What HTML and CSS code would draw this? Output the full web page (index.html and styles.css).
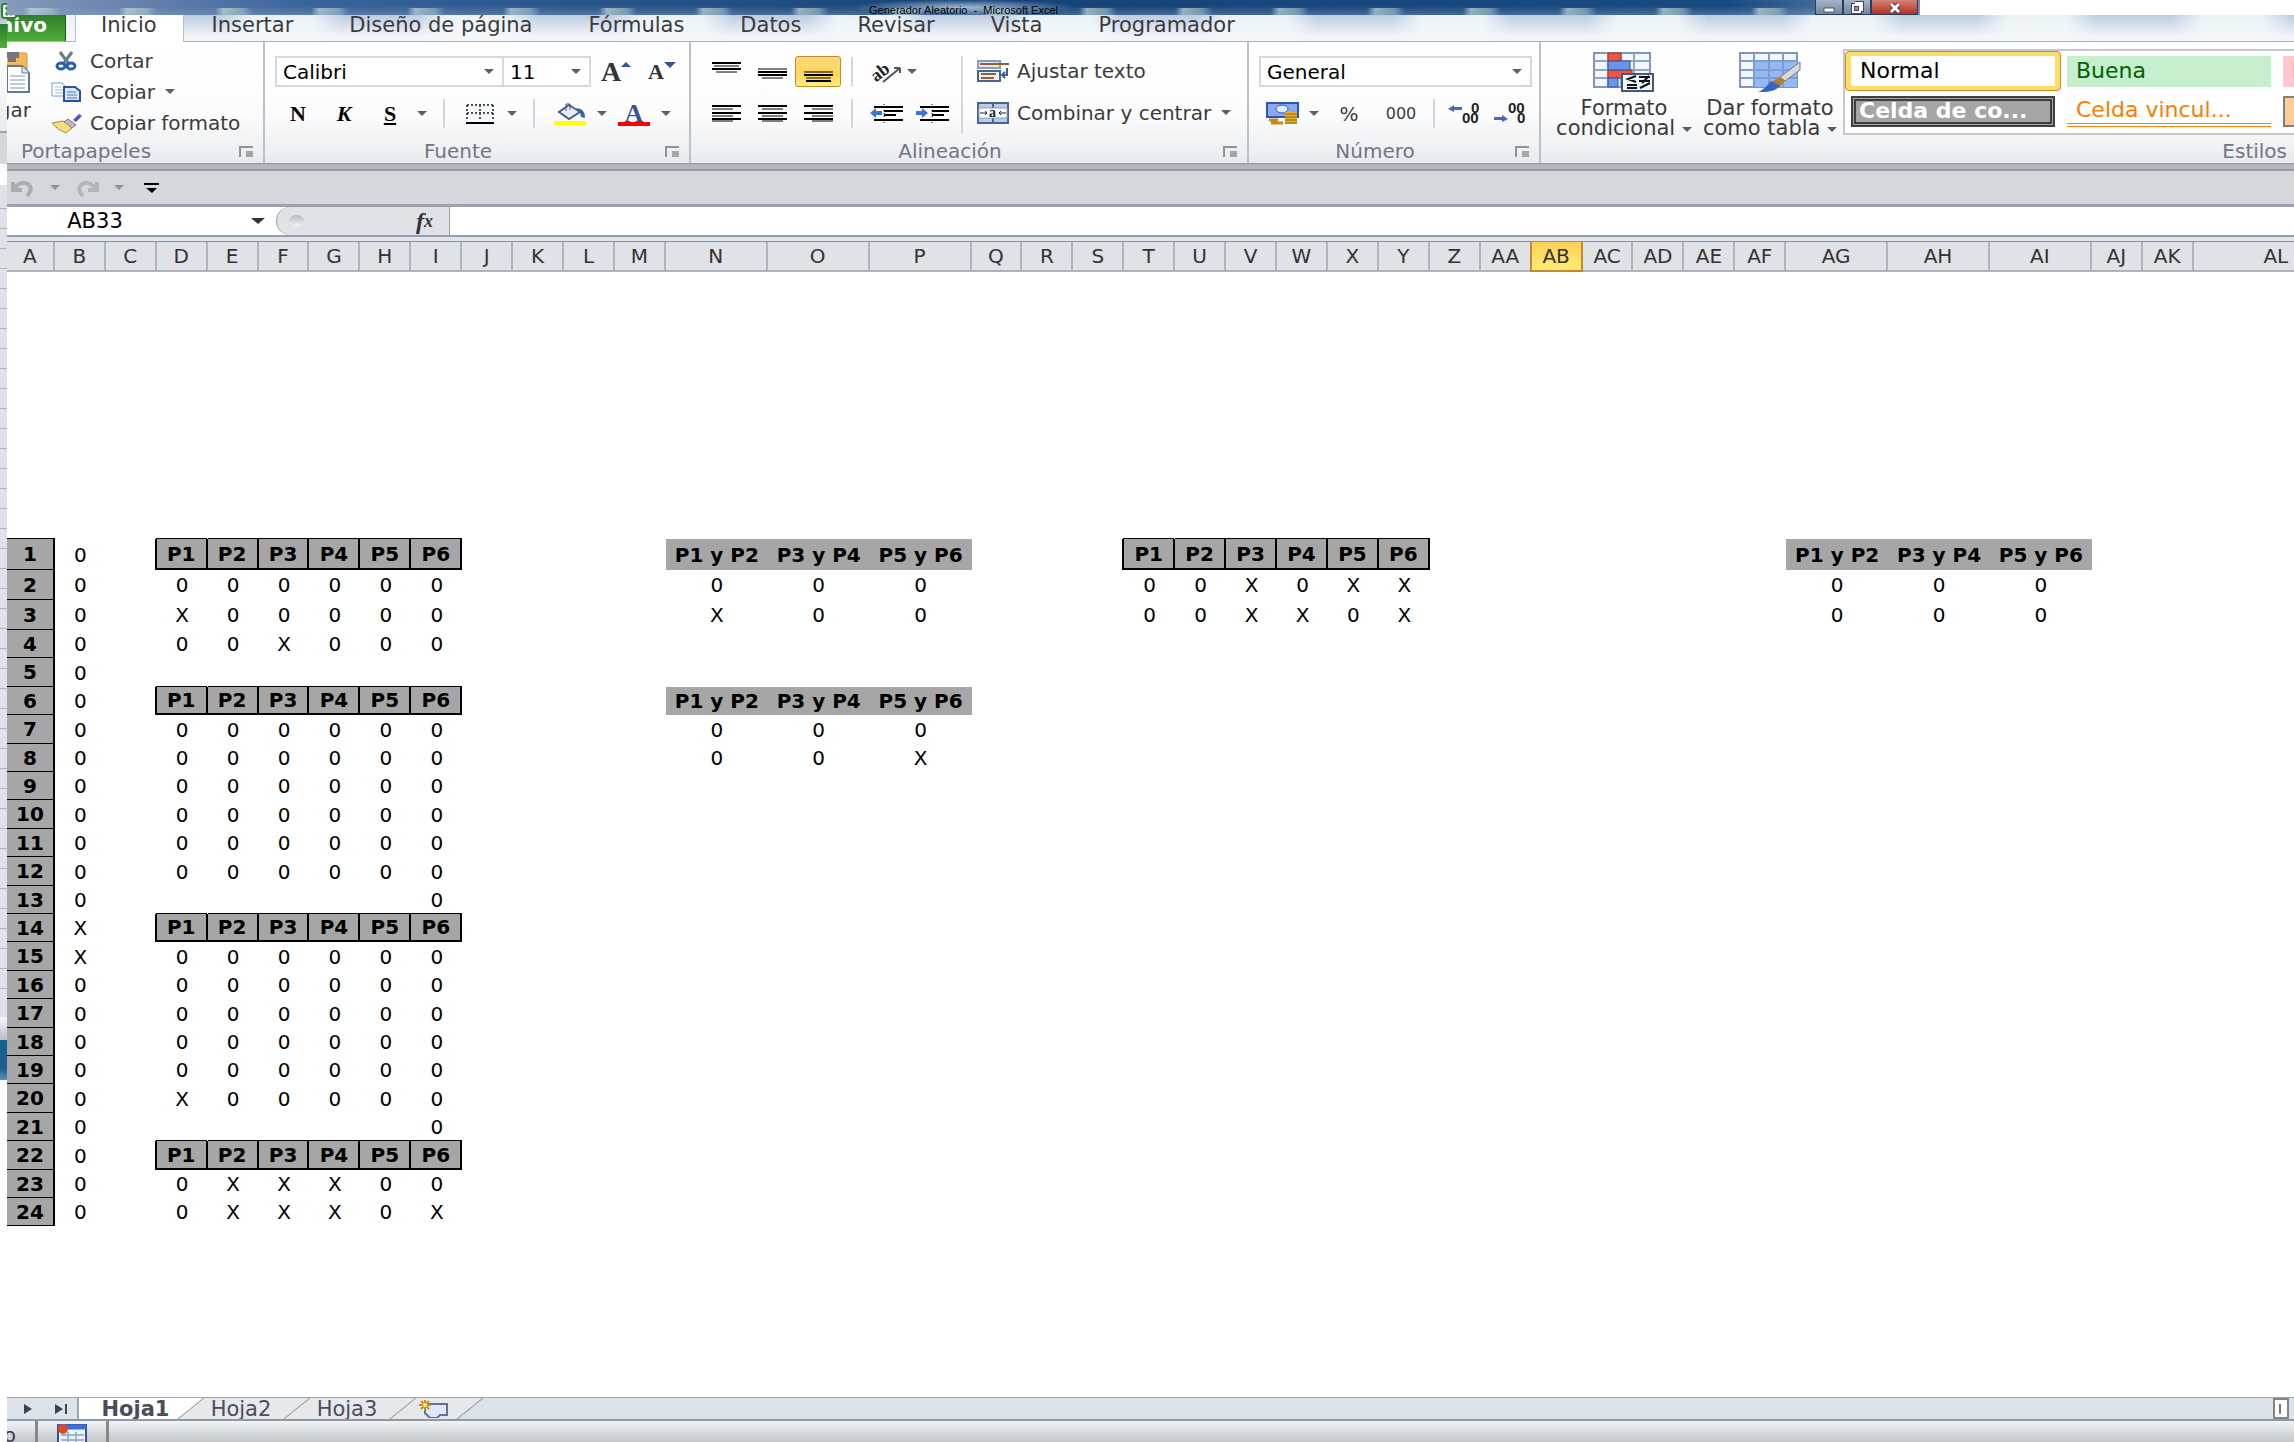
FILE: index.html
```html
<!DOCTYPE html>
<html lang="es">
<head>
    <meta charset="UTF-8">
    <meta name="viewport" content="width=device-width, initial-scale=1.0">
    <title>Generador Aleatorio - Microsoft Excel</title>
    <link rel="stylesheet" href="styles.css">
</head>
<body>

    <!-- Edge of the window behind -->
    <div class="behind">
        <div class="behind-top"></div>
        <div class="behind-file"></div>
        <div class="behind-ribbon"></div>
        <div class="behind-bar"></div>
        <div class="behind-rows"></div>
        <div class="behind-status"></div>
        <div class="behind-desktop"></div>
        <svg class="app-icon" width="16" height="16" viewBox="0 0 16 16"><rect x="1" y="1" width="14" height="14" rx="2" fill="#f4f8f2" stroke="#2f7f2c" stroke-width="2"/><path d="M5 4l6 8M11 4l-6 8" stroke="#2f8f2c" stroke-width="3"/></svg>
    </div>

    <div class="window">
        <header class="titlebar">
            <div class="title">
                <span>Generador Aleatorio&nbsp; -&nbsp; Microsoft Excel</span>
                <div class="window-buttons">
                    <button aria-label="Minimizar"><svg width="12" height="15"><rect x="1" y="8" width="10" height="4" fill="#fff" stroke="#556"/></svg></button>
                    <button aria-label="Restaurar"><svg width="14" height="15"><path d="M5 3h7v7h-2M3 5h7v7H3z" fill="none" stroke="#445" stroke-width="4"/><path d="M5 3h7v7h-2M3 5h7v7H3z" fill="none" stroke="#fff" stroke-width="2"/></svg></button>
                    <button class="close" aria-label="Cerrar"><svg width="14" height="15"><path d="M3 4l8 8M11 4l-8 8" stroke="#534" stroke-width="5"/><path d="M3 4l8 8M11 4l-8 8" stroke="#fff" stroke-width="3"/></svg></button>
                </div>
            </div>
        </header>

        <nav class="tabs">
            <button class="file">Archivo</button>
            <button class="active">Inicio</button>
            <button>Insertar</button>
            <button>Diseño de página</button>
            <button>Fórmulas</button>
            <button>Datos</button>
            <button>Revisar</button>
            <button>Vista</button>
            <button>Programador</button>
        </nav>

        <div class="ribbon">
            <section class="group clipboard">
                <div class="group-body">
                    <button class="paste">
                        <svg width="36" height="42" viewBox="0 0 36 42">
                            <rect x="2" y="1" width="30" height="34" rx="2" fill="#f0b95a" stroke="#c98d35"/>
                            <path d="M10 0h14v6h-3v4h-8V6h-3z" fill="#777"/>
                            <path d="M12 14h15l7 7v19H12z" fill="#fff" stroke="#66788f" stroke-width="2"/>
                            <path d="M27 14v7h7" fill="#dde8f5" stroke="#66788f"/>
                            <path d="M15 24h15M15 28h15M15 32h15M15 36h15" stroke="#bccbdc" stroke-width="2"/>
                        </svg>
                        <span>Pegar</span>
                    </button>
                    <div class="clip-list">
                        <button class="item">
                            <svg width="32" height="20" viewBox="0 0 32 20">
                                <path d="M10 1l8 11M22 1l-8 11" stroke="#6d7a8c" stroke-width="3"/>
                                <ellipse cx="11" cy="15" rx="4" ry="3" fill="none" stroke="#2b5db0" stroke-width="3"/>
                                <ellipse cx="21" cy="15" rx="4" ry="3" fill="none" stroke="#2b5db0" stroke-width="3"/>
                            </svg>Cortar</button>
                        <button class="item">
                            <svg width="32" height="20" viewBox="0 0 32 20">
                                <path d="M2 1h10l4 4v9H2z" fill="#fff" stroke="#7d9bc8"/>
                                <path d="M5 5h6M5 8h8M5 11h8" stroke="#9db4d8"/>
                                <path d="M14 5h11l5 4v10H14z" fill="#dbe8fb" stroke="#2c4fa0" stroke-width="2"/>
                                <path d="M17 10h9M17 13h10M17 16h10" stroke="#4d74bd"/>
                            </svg>Copiar <i class="caret"></i></button>
                        <button class="item">
                            <svg width="32" height="20" viewBox="0 0 32 20">
                                <path d="M23 7l6-6 3 2-6 6z" fill="#5a50b8"/>
                                <path d="M18 6l8 6-4 3-8-6z" fill="#b9bcc4" stroke="#777"/>
                                <path d="M13 8l9 7-6 5C11 18 6 15 2 10z" fill="#f3df7e" stroke="#a08a4a"/>
                            </svg>Copiar formato</button>
                    </div>
                </div>
                <footer>Portapapeles<button class="launcher" aria-label="Más opciones"></button></footer>
            </section>

            <section class="group font">
                <div class="group-body">
                    <div class="row">
                        <label class="combo name"><select aria-label="Fuente"><option>Calibri</option></select><i class="caret"></i></label>
                        <label class="combo size"><select aria-label="Tamaño"><option>11</option></select><i class="caret"></i></label>
                        <button class="tool serif big">A<svg width="10" height="6"><path d="M5 0l5 5H0z" fill="#35549c"/></svg></button>
                        <button class="tool serif small">A<svg width="12" height="6"><path d="M0 0h12L6 6z" fill="#35549c"/></svg></button>
                    </div>
                    <div class="row">
                        <button class="tool serif"><b>N</b></button>
                        <button class="tool serif"><b><em>K</em></b></button>
                        <button class="tool serif"><b><u>S</u></b></button>
                        <button class="drop" aria-label="Subrayado"><i class="caret"></i></button>
                        <span class="sep"></span>
                        <button class="tool" aria-label="Bordes"><svg width="28" height="20"><path d="M1 1h26M1 9h26M1 1v16M14 1v16M27 1v16" stroke="#456" stroke-width="2" stroke-dasharray="2 2"/><path d="M0 19h28" stroke="#000" stroke-width="2"/></svg></button>
                        <button class="drop" aria-label="Más bordes"><i class="caret"></i></button>
                        <span class="sep"></span>
                        <button class="tool" aria-label="Color de relleno"><svg width="32" height="22"><path d="M15 2l11 7-11 7L5 9z" fill="#e8eef7" stroke="#4a5f86" stroke-width="2"/><path d="M12 8V1h4v6" fill="none" stroke="#4a5f86"/><path d="M22 5q9 0 9 10l-4-1-1-5z" fill="#2f63b8"/><rect y="18" width="32" height="4" fill="#ff0"/></svg></button>
                        <button class="drop" aria-label="Más colores de relleno"><i class="caret"></i></button>
                        <button class="tool font-color">A</button>
                        <button class="drop" aria-label="Más colores de fuente"><i class="caret"></i></button>
                    </div>
                </div>
                <footer>Fuente<button class="launcher" aria-label="Más opciones"></button></footer>
            </section>

            <section class="group align">
                <div class="group-body columns">
                    <div class="stack">
                        <div class="row">
                            <button class="tool" aria-label="Alinear arriba"><svg width="29" height="20"><path d="M0 1h29M0 7h29" stroke="#000" stroke-width="2"/><path d="M2 4h25M4 10h21" stroke="#000"/></svg></button>
                            <button class="tool" aria-label="Alinear al medio"><svg width="29" height="20"><path d="M0 10h29M0 13h29" stroke="#000" stroke-width="2"/><path d="M0 7h29M4 16h21" stroke="#000"/></svg></button>
                            <button class="tool on" aria-label="Alinear abajo"><svg width="29" height="20"><path d="M0 13h29M2 19h25" stroke="#000" stroke-width="2"/><path d="M0 10h29M2 16h25" stroke="#000"/></svg></button>
                            <span class="sep"></span>
                            <button class="tool" aria-label="Orientación"><svg width="32" height="22"><text x="1" y="17" transform="rotate(-38 10 12)" class="ab large-ab">ab</text><path d="M13 21L30 7M30 7h-6M30 7v5" fill="none" stroke="#555" stroke-width="2"/></svg></button>
                            <button class="drop near" aria-label="Más orientaciones"><i class="caret"></i></button>
                        </div>
                        <div class="row">
                            <button class="tool" aria-label="Izquierda"><svg width="29" height="17"><path d="M0 1h29M0 8h29M0 14h29" stroke="#000" stroke-width="2"/><path d="M0 4h21M0 11h21M0 16h21" stroke="#000"/></svg></button>
                            <button class="tool" aria-label="Centrar"><svg width="29" height="17"><path d="M0 1h29M0 8h29M0 14h29" stroke="#000" stroke-width="2"/><path d="M4 4h21M4 11h21M4 16h21" stroke="#000"/></svg></button>
                            <button class="tool" aria-label="Derecha"><svg width="29" height="17"><path d="M0 1h29M0 8h29M0 14h29" stroke="#000" stroke-width="2"/><path d="M8 4h21M8 11h21M8 16h21" stroke="#000"/></svg></button>
                            <span class="sep"></span>
                            <button class="tool" aria-label="Disminuir sangría"><svg width="33" height="20"><path d="M4 3h29M14 7h19M14 11h12M4 16h29" stroke="#000" stroke-width="2"/><path d="M14 0v20" stroke="#000" stroke-dasharray="1 2"/><path d="M0 9l6-5v3h6v4H6v3z" fill="#3c74d0"/></svg></button>
                            <button class="tool" aria-label="Aumentar sangría"><svg width="33" height="20"><path d="M4 3h29M16 7h17M16 11h12M4 16h29" stroke="#000" stroke-width="2"/><path d="M16 0v20" stroke="#000" stroke-dasharray="1 2"/><path d="M12 9L6 4v3H0v4h6v3z" fill="#3c74d0"/></svg></button>
                        </div>
                    </div>
                    <span class="sep tall"></span>
                    <div class="stack">
                        <button class="item">
                            <svg width="32" height="22" viewBox="0 0 32 22">
                                <rect x="1" y="1" width="22" height="7" fill="#dfe9f7" stroke="#8a9cb8" stroke-width="2"/>
                                <path d="M3 4h29" stroke="#93602f" stroke-width="2"/>
                                <rect x="1" y="11" width="22" height="10" fill="#eaf1fb" stroke="#4a648f" stroke-width="2"/>
                                <path d="M4 14h15M4 18h13" stroke="#93602f" stroke-width="2"/>
                                <path d="M30 8v7h-4M28 12l-3 3 3 3" fill="none" stroke="#3e5f9d" stroke-width="2"/>
                            </svg>Ajustar texto</button>
                        <button class="item">
                            <svg width="32" height="22" viewBox="0 0 32 22">
                                <rect x="1" y="1" width="30" height="20" fill="#b9cbe6" stroke="#4a648f" stroke-width="2"/>
                                <path d="M16 1v20" stroke="#4a648f" stroke-width="2"/>
                                <rect x="2" y="6" width="28" height="10" fill="#fff" stroke="#8ca3c6"/>
                                <path d="M3 11h7M22 11h7M8 9l2 2-2 2M24 9l-2 2 2 2" fill="none" stroke="#222"/>
                                <text x="12" y="15" class="ab">a</text>
                            </svg>Combinar y centrar <i class="caret"></i></button>
                    </div>
                </div>
                <footer>Alineación<button class="launcher" aria-label="Más opciones"></button></footer>
            </section>

            <section class="group number">
                <div class="group-body">
                    <div class="row">
                        <label class="combo format"><select aria-label="Formato de número"><option>General</option></select><i class="caret"></i></label>
                    </div>
                    <div class="row">
                        <button class="tool" aria-label="Formato de contabilidad"><svg width="33" height="23"><rect x="1" y="1" width="31" height="14" fill="#88a9ea" stroke="#2f56b4" stroke-width="2"/><ellipse cx="16" cy="7" rx="6" ry="4" fill="#dfe9fc" stroke="#2f56b4"/><path d="M19 10h12v12H19z" fill="#e8b02c"/><path d="M19 12h12M19 15h12M19 18h12M19 21h12" stroke="#8c6410"/><path d="M3 18h9M5 21h12" stroke="#c48b1b" stroke-width="3"/></svg></button>
                        <button class="drop" aria-label="Más formatos"><i class="caret"></i></button>
                        <button class="tool wide">%</button>
                        <button class="tool wide zeros">000</button>
                        <span class="sep"></span>
                        <button class="tool" aria-label="Aumentar decimales"><svg width="33" height="22"><path d="M0 6l6-4v2h8v3H6v2z" fill="#3f6cc8"/><text x="23" y="10" class="dec">0</text><text x="14" y="20" class="dec">00</text></svg></button>
                        <button class="tool" aria-label="Disminuir decimales"><svg width="33" height="22"><path d="M14 16l-6-4v2H0v3h8v2z" fill="#3f6cc8"/><text x="14" y="10" class="dec">00</text><text x="23" y="20" class="dec">0</text></svg></button>
                    </div>
                </div>
                <footer>Número<button class="launcher" aria-label="Más opciones"></button></footer>
            </section>

            <section class="group styles">
                <div class="group-body columns">
                    <button class="large">
                        <svg width="62" height="40" viewBox="0 0 62 40">
                            <rect x="1" y="1" width="56" height="34" fill="#f4f8fe" stroke="#7f95bd" stroke-width="2"/>
                            <path d="M1 9h56M1 18h56M1 26h56M15 1v34M28 1v34M41 1v34" stroke="#8ea5cc" stroke-width="2"/>
                            <path d="M15 1h13v8H15zM15 18h24v8H15z" fill="#f0553f" stroke="#b52a17"/>
                            <path d="M15 9h22v9H15zM15 26h10v9H15z" fill="#6695ec" stroke="#2c50a5"/>
                            <rect x="29" y="22" width="31" height="17" fill="#eef5fd" stroke="#41597a" stroke-width="2"/>
                            <path d="M43 24l-8 3 8 3M34 33h10M34 36h10M46 25h11M46 29h11M56 24l-7 7M47 36l10-5" fill="none" stroke="#111" stroke-width="2"/>
                        </svg>
                        <span>Formato<br>condicional <i class="caret"></i></span>
                    </button>
                    <button class="large">
                        <svg width="62" height="40" viewBox="0 0 62 40">
                            <rect x="1" y="1" width="57" height="34" fill="#f4f8fe" stroke="#7f95bd" stroke-width="2"/>
                            <rect x="15" y="9" width="43" height="26" fill="#93b8f5"/>
                            <path d="M1 9h57M1 18h57M1 26h57M15 1v34M30 1v34M44 1v34" stroke="#7f9ccf" stroke-width="2"/>
                            <path d="M61 10v8L46 29l-5-4z" fill="#d8d8d8" stroke="#777"/>
                            <path d="M41 25l5 4-6 6-8-5z" fill="#b07d32"/>
                            <path d="M32 29l9 5q-6 7-22 6 6-2 13-11z" fill="#3266c2"/>
                        </svg>
                        <span>Dar formato<br>como tabla <i class="caret"></i></span>
                    </button>
                    <div class="gallery">
                        <button class="selected"><span>Normal</span></button>
                        <button><span class="good">Buena</span></button>
                        <button><span class="bad">Incorrecto</span></button>
                        <button><span class="check">Celda de co...</span></button>
                        <button><span class="linked">Celda vincul...</span></button>
                        <button><span class="input">Entrada</span></button>
                    </div>
                </div>
                <footer>Estilos</footer>
            </section>
        </div>

        <div class="quick">
            <button class="tool" aria-label="Deshacer"><svg width="26" height="18"><path d="M3 3v8h9M4 10q7-9 14-5 6 5-1 12" fill="none" stroke="#a9acb1" stroke-width="4"/></svg></button>
            <button class="drop faded" aria-label="Lista deshacer"><i class="caret"></i></button>
            <button class="tool" aria-label="Rehacer"><svg width="26" height="18"><path d="M23 3v8h-9M22 10q-7-9-14-5-6 5 1 12" fill="none" stroke="#b3b6ba" stroke-width="4"/></svg></button>
            <button class="drop faded" aria-label="Lista rehacer"><i class="caret"></i></button>
            <button class="tool" aria-label="Personalizar"><svg width="15" height="10"><path d="M0 1h15" stroke="#000" stroke-width="2"/><path d="M2 5h11L8 10z"/></svg></button>
        </div>

        <div class="formula-bar">
            <input class="name-box" aria-label="Cuadro de nombres" value="AB33">
            <button class="name-drop" aria-label="Nombres"><i class="caret"></i></button>
            <div class="fx"><span class="knob"></span><button>f<small>x</small></button></div>
            <input class="formula" aria-label="Barra de fórmulas">
        </div>

        <main class="sheet">
            <table>
                <colgroup>
                    <col class="first"><col span="12"><col span="3" class="wide"><col span="16"><col span="3" class="wide"><col span="2"><col class="last">
                </colgroup>
                <thead>
                    <tr>
                        <th>A</th><th>B</th><th>C</th><th>D</th><th>E</th><th>F</th><th>G</th><th>H</th><th>I</th><th>J</th><th>K</th><th>L</th><th>M</th>
                        <th>N</th><th>O</th><th>P</th>
                        <th>Q</th><th>R</th><th>S</th><th>T</th><th>U</th><th>V</th><th>W</th><th>X</th><th>Y</th><th>Z</th>
                        <th>AA</th><th class="current">AB</th><th>AC</th><th>AD</th><th>AE</th><th>AF</th>
                        <th>AG</th><th>AH</th><th>AI</th><th>AJ</th><th>AK</th><th>AL</th>
                    </tr>
                </thead>
                <tbody class="blank"><tr><td colspan="38"></td></tr></tbody>
                <tbody class="data">
                    <tr><th>1</th><td>0</td><td></td><th>P1</th><th>P2</th><th>P3</th><th>P4</th><th>P5</th><th>P6</th><td colspan="4"></td><th class="pair">P1 y P2</th><th class="pair">P3 y P4</th><th class="pair">P5 y P6</th><td colspan="3"></td><th>P1</th><th>P2</th><th>P3</th><th>P4</th><th>P5</th><th>P6</th><td colspan="7"></td><th class="pair">P1 y P2</th><th class="pair">P3 y P4</th><th class="pair">P5 y P6</th></tr>
                    <tr><th>2</th><td>0</td><td></td><td>0</td><td>0</td><td>0</td><td>0</td><td>0</td><td>0</td><td colspan="4"></td><td>0</td><td>0</td><td>0</td><td colspan="3"></td><td>0</td><td>0</td><td>X</td><td>0</td><td>X</td><td>X</td><td colspan="7"></td><td>0</td><td>0</td><td>0</td></tr>
                    <tr><th>3</th><td>0</td><td></td><td>X</td><td>0</td><td>0</td><td>0</td><td>0</td><td>0</td><td colspan="4"></td><td>X</td><td>0</td><td>0</td><td colspan="3"></td><td>0</td><td>0</td><td>X</td><td>X</td><td>0</td><td>X</td><td colspan="7"></td><td>0</td><td>0</td><td>0</td></tr>
                    <tr><th>4</th><td>0</td><td></td><td>0</td><td>0</td><td>X</td><td>0</td><td>0</td><td>0</td></tr>
                    <tr><th>5</th><td>0</td></tr>
                    <tr><th>6</th><td>0</td><td></td><th>P1</th><th>P2</th><th>P3</th><th>P4</th><th>P5</th><th>P6</th><td colspan="4"></td><th class="pair">P1 y P2</th><th class="pair">P3 y P4</th><th class="pair">P5 y P6</th></tr>
                    <tr><th>7</th><td>0</td><td></td><td>0</td><td>0</td><td>0</td><td>0</td><td>0</td><td>0</td><td colspan="4"></td><td>0</td><td>0</td><td>0</td></tr>
                    <tr><th>8</th><td>0</td><td></td><td>0</td><td>0</td><td>0</td><td>0</td><td>0</td><td>0</td><td colspan="4"></td><td>0</td><td>0</td><td>X</td></tr>
                    <tr><th>9</th><td>0</td><td></td><td>0</td><td>0</td><td>0</td><td>0</td><td>0</td><td>0</td></tr>
                    <tr><th>10</th><td>0</td><td></td><td>0</td><td>0</td><td>0</td><td>0</td><td>0</td><td>0</td></tr>
                    <tr><th>11</th><td>0</td><td></td><td>0</td><td>0</td><td>0</td><td>0</td><td>0</td><td>0</td></tr>
                    <tr><th>12</th><td>0</td><td></td><td>0</td><td>0</td><td>0</td><td>0</td><td>0</td><td>0</td></tr>
                    <tr><th>13</th><td>0</td><td colspan="6"></td><td>0</td></tr>
                    <tr><th>14</th><td>X</td><td></td><th>P1</th><th>P2</th><th>P3</th><th>P4</th><th>P5</th><th>P6</th></tr>
                    <tr><th>15</th><td>X</td><td></td><td>0</td><td>0</td><td>0</td><td>0</td><td>0</td><td>0</td></tr>
                    <tr><th>16</th><td>0</td><td></td><td>0</td><td>0</td><td>0</td><td>0</td><td>0</td><td>0</td></tr>
                    <tr><th>17</th><td>0</td><td></td><td>0</td><td>0</td><td>0</td><td>0</td><td>0</td><td>0</td></tr>
                    <tr><th>18</th><td>0</td><td></td><td>0</td><td>0</td><td>0</td><td>0</td><td>0</td><td>0</td></tr>
                    <tr><th>19</th><td>0</td><td></td><td>0</td><td>0</td><td>0</td><td>0</td><td>0</td><td>0</td></tr>
                    <tr><th>20</th><td>0</td><td></td><td>X</td><td>0</td><td>0</td><td>0</td><td>0</td><td>0</td></tr>
                    <tr><th>21</th><td>0</td><td colspan="6"></td><td>0</td></tr>
                    <tr><th>22</th><td>0</td><td></td><th>P1</th><th>P2</th><th>P3</th><th>P4</th><th>P5</th><th>P6</th></tr>
                    <tr><th>23</th><td>0</td><td></td><td>0</td><td>X</td><td>X</td><td>X</td><td>0</td><td>0</td></tr>
                    <tr><th>24</th><td>0</td><td></td><td>0</td><td>X</td><td>X</td><td>X</td><td>0</td><td>X</td></tr>
                </tbody>
            </table>
        </main>

        <div class="sheet-tabs">
            <div class="sheet-nav">
                <button aria-label="Siguiente"><svg width="12" height="12"><path d="M1 1l8 5-8 5z" fill="#3b4350"/></svg></button>
                <button aria-label="Última"><svg width="12" height="12"><path d="M0 1l8 5-8 5zM10 1h2v10h-2z" fill="#3b4350"/></svg></button>
            </div>
            <button class="sheet-tab active">Hoja1</button>
            <button class="sheet-tab">Hoja2</button>
            <button class="sheet-tab">Hoja3</button>
            <button class="sheet-tab new" aria-label="Insertar hoja"><svg width="30" height="18"><path d="M6 4h22v11h-7l-3 3h-7l-5-5z" fill="#dfe8f6" stroke="#5d7199" stroke-width="2"/><path d="M6 0v10M0 5h12M2 1l8 8M10 1L2 9" stroke="#d08a1d" stroke-width="2"/><circle cx="6" cy="5" r="2" fill="#fff3a0"/></svg></button>
            <span class="splitter"></span>
        </div>

        <footer class="status">
            <span class="ready">Listo</span>
            <span class="bar"></span>
            <button aria-label="Grabar macro"><svg width="30" height="20"><rect x="1" y="1" width="28" height="24" fill="#eef4fc" stroke="#3a5488" stroke-width="2"/><path d="M1 3h28" stroke="#3b6fd8" stroke-width="5"/><path d="M4 11h23M4 16h23M11 8v12M19 8v12" stroke="#9db2d8" stroke-width="2"/><circle cx="6" cy="5" r="5" fill="#dd4a2c"/></svg></button>
            <span class="bar"></span>
        </footer>
    </div>

</body>
</html>
```
FILE: styles.css
```css
* {
    box-sizing: border-box;
}
body {
    margin: 0;
    display: flex;
    height: 100vh;
    overflow: hidden;
    background: #fff;
    color: #3b3b3b;
    font-family: "DejaVu Sans", Verdana, sans-serif;
    font-size: 20px;
}
button, input, select {
    margin: 0;
    padding: 0;
    border: 0;
    background: none;
    color: inherit;
    font: inherit;
}
button {
    display: flex;
    align-items: center;
    justify-content: center;
    white-space: nowrap;
}
svg {
    flex: none;
    display: block;
}

/* window behind */
.behind {
    flex: 0 0 7px;
    position: relative;
    display: flex;
    flex-direction: column;
}
.app-icon {
    position: absolute;
    top: 3px;
    left: 1px;
}
.behind-top {
    height: 24px;
    background: linear-gradient(#8798bb, #c5d2e6);
}
.behind-file {
    height: 24px;
    background: linear-gradient(#2c7a2a, #4fae35);
}
.behind-ribbon {
    height: 85px;
    background: linear-gradient(#fff, #e9ecef);
    border-bottom: 2px solid #9ba3ad;
}
.behind-bar {
    height: 56px;
    background: linear-gradient(#d4d7dc 31px, #fff 31px, #fff 52px, #dfe2e6 52px);
}
.behind-rows {
    height: 813px;
    background: repeating-linear-gradient(#dfe2e6 0, #dfe2e6 19px, #b0b4ba 19px, #b0b4ba 20px);
}
.behind-status {
    height: 38px;
    background: linear-gradient(#dde1e9 14px, #f4f6f8 16px, #b7bcc3);
}
.behind-desktop {
    height: 40px;
    background: linear-gradient(#1a5f92 70%, #5c8fb8);
}

.window {
    flex: 1;
    min-width: 0;
    display: flex;
    flex-direction: column;
}

/* title bar */
.titlebar {
    height: 15px;
    padding-right: 374px;
}
.title {
    display: flex;
    justify-content: center;
    height: 15px;
    overflow: hidden;
    position: relative;
    background:
        linear-gradient(rgba(30, 75, 130, 0) 40%, rgba(140, 165, 195, .4)),
        repeating-linear-gradient(90deg, transparent 0, transparent 16px, rgba(205, 228, 215, .7) 24px, rgba(190, 215, 210, .5) 44px, transparent 54px, transparent 96px) 0 8px no-repeat,
        linear-gradient(90deg, #8798bb 0, #3a639b 300px, #164479 50%, #184a80 90%, #6f8fb2);
    color: #000;
    font-family: "Liberation Sans", Arial, sans-serif;
    font-size: 11px;
    line-height: 12px;
}
.title > span {
    padding: 4px 12px 0;
    background: radial-gradient(rgba(200, 215, 232, .8), rgba(200, 215, 232, 0) 75%);
}
.window-buttons {
    position: absolute;
    top: 0;
    right: 2px;
    display: flex;
}
.window-buttons button {
    width: 28px;
    height: 15px;
    border: 1px solid #2a3d55;
    border-top: 0;
    background: linear-gradient(#a5b5c8, #6f86a0);
}
.window-buttons .close {
    width: 47px;
    background: linear-gradient(#d08478, #b5301f);
}

/* ribbon tabs */
.tabs {
    display: flex;
    height: 27px;
    border-bottom: 1px solid #aeb4bc;
    background:
        linear-gradient(rgba(255, 255, 255, 0), rgba(246, 248, 250, .9) 80%),
        repeating-linear-gradient(90deg, #bccbe2 0, #bccbe2 20px, #eaf2f6 50px, #eaf2f6 110px, #bccbe2 140px, #bccbe2 195px);
}
.tabs button {
    height: 26px;
    padding: 0 28px 5px;
    font-size: 21px;
    line-height: 21px;
}
.tabs .file {
    width: 59px;
    margin-right: 9px;
    padding: 0 18px 5px 0;
    justify-content: flex-end;
    overflow: hidden;
    border-right: 1px solid #1c5c1a;
    background: linear-gradient(#2f7f2c, #4fae35);
    color: #fff;
    font-size: 20px;
    font-weight: bold;
}
.tabs .active {
    height: 27px;
    padding: 0 26px 6px 25px;
    border: 1px solid #b8bec8;
    border-width: 0 1px;
    background: #fff;
}

/* ribbon */
.ribbon {
    display: flex;
    height: 129px;
    border-bottom: 2px solid #969fa9;
    background: linear-gradient(#8f9296 0, #b4b7bb 2px, #c4c8cd) 0 121px no-repeat;
}
.group {
    flex: none;
    display: flex;
    flex-direction: column;
    height: 121px;
    border-right: 2px solid #bcc1c8;
    background: linear-gradient(#fff, #fcfcfd 60%, #e8ebee);
}
.group-body {
    flex: 1;
    display: flex;
    flex-direction: column;
    gap: 11px;
    padding: 14px 0 0 10px;
}
.group-body.columns {
    flex-direction: row;
    gap: 0;
}
.group footer {
    position: relative;
    height: 22px;
    padding-right: 38px;
    color: #6f7685;
    line-height: 20px;
    text-align: center;
}
.launcher {
    position: absolute;
    right: 10px;
    top: 5px;
    width: 14px;
    height: 11px;
    border: 1px solid #8e949c;
    border-width: 2px 0 0 2px;
}
.launcher::after {
    content: "";
    width: 7px;
    height: 6px;
    margin: 3px 0 0 5px;
    background: #a2a7ad;
}
.row {
    display: flex;
    align-items: center;
    height: 31px;
}
.stack {
    display: flex;
    flex-direction: column;
    align-items: flex-start;
    gap: 11px;
}
.caret {
    flex: none;
    display: inline-block;
    vertical-align: middle;
    border: solid transparent;
    border-width: 5px 5px 0;
    border-top-color: #5c5f64;
}
.tool {
    flex: none;
    width: 46px;
    height: 31px;
}
.tool.wide {
    width: 52px;
}
.tool.on {
    border: 1px solid #c28a30;
    border-radius: 3px;
    background: linear-gradient(#fbd978, #ffd65c 60%, #ffef7c);
}
.drop {
    flex: none;
    width: 18px;
    height: 31px;
}
.drop.near {
    margin-left: -6px;
}
.sep {
    flex: none;
    width: 2px;
    height: 29px;
    margin: 0 12px;
    background: #d3d7dd;
}
.item {
    height: 31px;
    gap: 8px;
    padding-bottom: 2px;
}
.item .caret {
    margin-left: 2px;
}
.combo {
    position: relative;
    display: flex;
}
.combo select {
    width: 100%;
    height: 31px;
    padding-left: 6px;
    appearance: none;
    border: 2px solid #d5d8dc;
    background: #fff;
    color: #000;
}
.combo .caret {
    position: absolute;
    right: 10px;
    top: 13px;
}

.clipboard {
    width: 258px;
}
.clipboard .group-body {
    flex-direction: row;
    gap: 17px;
    padding: 4px 0 0;
}
.clipboard footer {
    padding-right: 98px;
}
.paste {
    width: 24px;
    height: 80px;
    flex-direction: column;
    align-items: flex-end;
    justify-content: flex-start;
    gap: 6px;
    padding-top: 6px;
    overflow: hidden;
}
.paste span {
    line-height: 20px;
}
.clip-list .item svg {
    margin-left: 2px;
}

.font {
    width: 426px;
}
.combo.name {
    width: 229px;
}
.combo.size {
    width: 87px;
}
.size select {
    border-left-width: 0;
}
.serif {
    color: #000;
    font-family: "Liberation Serif", Georgia, serif;
    font-size: 22px;
}
.serif.big, .serif.small {
    color: #333;
    font-weight: bold;
}
.serif.big {
    margin-left: 2px;
    font-size: 28px;
}
.serif.big svg, .serif.small svg {
    margin-bottom: 14px;
}
.font-color {
    color: #35549c;
    font-family: "Liberation Serif", Georgia, serif;
    font-size: 26px;
    font-weight: bold;
    line-height: 20px;
    height: 24px;
    background: linear-gradient(red, red) center bottom / 32px 4px no-repeat;
}

.align {
    width: 558px;
}
.align .group-body {
    padding-left: 12px;
}
.align .row .sep {
    margin: 0 10px;
}
.sep.tall {
    height: 78px;
    margin: 0 14px 0 6px;
}
.ab {
    font: bold 14px "Liberation Serif", serif;
    fill: #222;
}
.large-ab {
    font-size: 18px;
}

.number {
    width: 292px;
}
.number .sep {
    margin: 0 6px;
}
.combo.format {
    width: 273px;
}
.zeros {
    font-size: 16px;
}
.dec {
    font: bold 15px "Liberation Sans", sans-serif;
    fill: #222;
}

.styles {
    flex: 1;
    min-width: 0;
    overflow: hidden;
    border-right: 0;
}
.styles .group-body {
    padding: 7px 0 0 10px;
}
.styles footer {
    padding-right: 7px;
    text-align: right;
}
.large {
    flex: none;
    width: 146px;
    height: 90px;
    flex-direction: column;
    justify-content: flex-start;
    gap: 6px;
    padding-top: 3px;
    font-size: 21px;
    line-height: 20px;
}
.gallery {
    flex: none;
    display: grid;
    grid-template-columns: repeat(3, 216px);
    grid-auto-rows: 40px;
    height: 86px;
    border: 2px solid #c5c9cf;
    background: #fff;
    color: #000;
    font-size: 22px;
}
.gallery button {
    padding: 5px 6px 4px;
    align-items: stretch;
}
.gallery span {
    flex: 1;
    padding-left: 9px;
    line-height: 30px;
    text-align: left;
}
.gallery .selected {
    padding: 0;
    border: 1px solid #c2902f;
    border-radius: 4px;
    background: #ffdc66;
}
.gallery .selected span {
    margin: 4px 5px;
    background: #fff;
}
.gallery .good {
    background: #c6efce;
    color: #006100;
}
.gallery .bad {
    background: #ffc7ce;
    color: #9c0006;
}
.gallery .check {
    padding-left: 3px;
    border: 5px double #3f3f3f;
    background: #a5a5a5;
    color: #fff;
    font-weight: bold;
    line-height: 20px;
}
.gallery .linked {
    border-bottom: 4px double #ff8001;
    color: #fa7d00;
    line-height: 28px;
}
.gallery .input {
    border: 2px solid #7f7f7f;
    background: #ffcc99;
    color: #3f3f76;
}

/* quick access toolbar */
.quick {
    display: flex;
    align-items: center;
    height: 36px;
    border-bottom: 3px solid #9ba3ad;
    background: #d4d7dc;
}
.quick .tool {
    width: 32px;
}
.quick .drop {
    width: 32px;
}
.faded .caret {
    border-top-color: #8f9399;
}

/* formula bar */
.formula-bar {
    display: flex;
    height: 35px;
    border-bottom: 1px solid #8c929a;
    background: linear-gradient(#fff 28px, #969fa9 28px, #969fa9 30px, #e0e4ef 30px);
    color: #000;
}
.formula-bar > * {
    height: 28px;
}
.name-box {
    width: 232px;
    padding-right: 56px;
    font-size: 21px;
    text-align: center;
}
.name-drop {
    width: 37px;
}
.name-drop .caret {
    border-width: 6px 7px 0;
    border-top-color: #333;
}
.fx {
    display: flex;
    align-items: center;
    justify-content: space-between;
    width: 174px;
    padding: 0 16px 0 12px;
    border-right: 1px solid #969fa9;
    border-left: 1px solid #969fa9;
    border-radius: 18px 0 0 18px;
    background: #dfe2e6;
}
.fx button {
    color: #333;
    font: italic bold 24px "Liberation Serif", serif;
}
.fx small {
    font-size: 18px;
}
.knob {
    width: 15px;
    height: 12px;
    border-radius: 50%;
    background: linear-gradient(#b5b8bc, #f5f5f5);
}
.formula {
    flex: 1;
    min-width: 0;
}

/* sheet */
.sheet {
    flex: 1;
    min-height: 0;
    overflow: hidden;
}
table {
    width: calc(100% + 66px);
    table-layout: fixed;
    border-collapse: separate;
    border-spacing: 0;
    color: #000;
    line-height: 22px;
    text-align: center;
}
col {
    width: 50px;
}
col.first {
    width: 47px;
}
col.wide {
    width: 100px;
}
col.last {
    width: 163px;
}
th, td {
    padding: 0;
    white-space: nowrap;
}
thead th {
    height: 30px;
    border-right: 2px solid #b0b4ba;
    border-bottom: 2px solid #b0b4ba;
    background: #dfe2e6;
    color: #333;
    font-weight: normal;
}
thead .current {
    border-color: #c28a30;
    background: linear-gradient(#ffd058, #ffec70);
    box-shadow: -2px 0 #c28a30;
}
.blank td {
    height: 267px;
}
.data td, .data th {
    height: 28px;
}
.data tr:nth-child(5n) > *, .data tr:nth-child(5n + 2) > * {
    height: 29px;
}
.data tr:nth-child(1) > * {
    height: 31px;
}
.data tr:nth-child(2) > *, .data tr:nth-child(3) > * {
    height: 30px;
}
.data th {
    border-right: 2px solid #000;
    border-bottom: 2px solid #000;
    background: #a6a6a6;
    box-shadow: 0 -1px #000;
}
.data th:first-child {
    border-bottom-width: 1px;
}
.data td + th {
    box-shadow: -2px 0 #000, -1px -1px #000;
}
.data .pair, .data td + .pair {
    border: 0;
    box-shadow: none;
}

/* sheet tabs */
.sheet-tabs {
    position: relative;
    z-index: 0;
    display: flex;
    height: 24px;
    overflow: hidden;
    border-top: 1px solid #9fa4ac;
    border-bottom: 2px solid #8f98a5;
    background: #dde1e9;
    color: #4a4e5a;
    font-size: 21px;
    line-height: 20px;
}
.sheet-nav {
    z-index: 1;
    display: flex;
    gap: 20px;
    width: 72px;
    padding-left: 16px;
    border-right: 2px solid #9fa4ac;
    background: #dde1e9;
}
.sheet-tab {
    position: relative;
    width: 106px;
    padding-right: 8px;
}
.sheet-tab::before {
    content: "";
    position: absolute;
    z-index: -1;
    inset: 0;
    border-right: 2px solid #9fa4ac;
    background: #e6e9ec;
    transform: skewX(-51deg);
}
.sheet-tab.active {
    width: 113px;
    padding-right: 0;
    font-weight: bold;
}
.sheet-tab.active::before {
    left: -20px;
    background: #fff;
}
.sheet-tab.new {
    width: 67px;
}
.splitter {
    width: 16px;
    margin-left: auto;
    margin-right: 5px;
    border: 2px solid #858585;
    background: linear-gradient(#777, #777) 4px center / 2px 10px no-repeat #fff;
}

/* status bar */
.status {
    display: flex;
    height: 21px;
    overflow: hidden;
    background: linear-gradient(#f1f4f7, #c3c6ca);
}
.ready {
    display: flex;
    justify-content: flex-end;
    width: 9px;
    overflow: hidden;
    line-height: 28px;
}
.bar {
    width: 3px;
    margin: 0 19px;
    background: #85888c;
}
.status button {
    align-items: flex-start;
    width: 30px;
    padding-top: 3px;
}
```
